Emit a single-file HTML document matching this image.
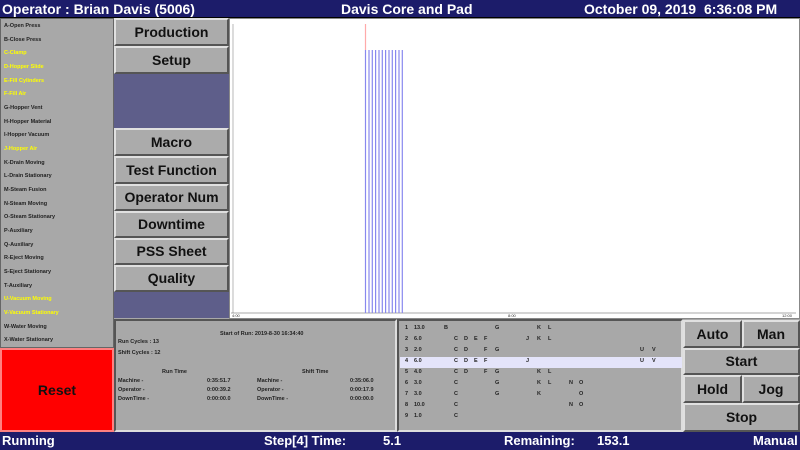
<!DOCTYPE html><html><head><style>
*{margin:0;padding:0;box-sizing:border-box}
body{width:800px;height:450px;position:relative;background:#a8a8a8;font-family:"Liberation Sans",sans-serif;overflow:hidden}
.a{position:absolute}
.bar{background:#1c1c6a;color:#fff;font-weight:bold;font-size:14px}
.btn{position:absolute;background:#ababab;border:2px solid;border-color:#e0e0e0 #555 #555 #e0e0e0;font-weight:bold;font-size:14px;text-align:center;color:#111}
.li{position:absolute;left:4px;font-size:5.5px;font-weight:bold;color:#222}
.y{color:#ffff00}
.s{position:absolute;font-size:5.5px;font-weight:bold;color:#222}
.r{position:absolute;left:0;width:800px;height:8px}
.r span{position:absolute;font-size:5.5px;font-weight:bold;color:#222}
</style></head><body>
<div class="a bar" style="left:0;top:0;width:800px;height:18px;border-bottom:1px solid #000"></div>
<div class="a" style="left:2px;top:1px;color:#fff;font-weight:bold;font-size:14px">Operator : Brian Davis (5006)</div>
<div class="a" style="left:341px;top:1px;color:#fff;font-weight:bold;font-size:14px">Davis Core and Pad</div>
<div class="a" style="left:584px;top:1px;color:#fff;font-weight:bold;font-size:14px">October 09, 2019</div>
<div class="a" style="left:704px;top:1px;color:#fff;font-weight:bold;font-size:14px">6:36:08 PM</div>

<div class="a" style="left:0;top:18px;width:114px;height:330px;background:#a8a8a8;border:1px solid #666"></div>
<div class="li" style="top:23px">A-Open Press</div>
<div class="li" style="top:37px">B-Close Press</div>
<div class="li y" style="top:50px">C-Clamp</div>
<div class="li y" style="top:64px">D-Hopper Slide</div>
<div class="li y" style="top:78px">E-Fill Cylinders</div>
<div class="li y" style="top:91px">F-Fill Air</div>
<div class="li" style="top:105px">G-Hopper Vent</div>
<div class="li" style="top:119px">H-Hopper Material</div>
<div class="li" style="top:132px">I-Hopper Vacuum</div>
<div class="li y" style="top:146px">J-Hopper Air</div>
<div class="li" style="top:160px">K-Drain Moving</div>
<div class="li" style="top:173px">L-Drain Stationary</div>
<div class="li" style="top:187px">M-Steam Fusion</div>
<div class="li" style="top:201px">N-Steam Moving</div>
<div class="li" style="top:214px">O-Steam Stationary</div>
<div class="li" style="top:228px">P-Auxiliary</div>
<div class="li" style="top:242px">Q-Auxiliary</div>
<div class="li" style="top:255px">R-Eject Moving</div>
<div class="li" style="top:269px">S-Eject Stationary</div>
<div class="li" style="top:283px">T-Auxiliary</div>
<div class="li y" style="top:296px">U-Vacuum Moving</div>
<div class="li y" style="top:310px">V-Vacuum Stationary</div>
<div class="li" style="top:324px">W-Water Moving</div>
<div class="li" style="top:337px">X-Water Stationary</div>

<div class="a" style="left:0;top:348px;width:114px;height:84px;background:#ff0000;border:2px solid #ff8080;color:#111;font-weight:bold;font-size:14px;text-align:center;line-height:80px">Reset</div>

<div class="btn" style="left:114px;top:18px;width:115px;height:28px;line-height:24px">Production</div>
<div class="btn" style="left:114px;top:46px;width:115px;height:28px;line-height:24px">Setup</div>
<div class="a" style="left:114px;top:74px;width:115px;height:54px;background:#5e5e8a"></div>
<div class="btn" style="left:114px;top:128px;width:115px;height:28px;line-height:24px">Macro</div>
<div class="btn" style="left:114px;top:156px;width:115px;height:28px;line-height:24px">Test Function</div>
<div class="btn" style="left:114px;top:184px;width:115px;height:27px;line-height:23px">Operator Num</div>
<div class="btn" style="left:114px;top:211px;width:115px;height:27px;line-height:23px">Downtime</div>
<div class="btn" style="left:114px;top:238px;width:115px;height:27px;line-height:23px">PSS Sheet</div>
<div class="btn" style="left:114px;top:265px;width:115px;height:27px;line-height:23px">Quality</div>
<div class="a" style="left:114px;top:292px;width:115px;height:26px;background:#5e5e8a"></div>

<div class="a" style="left:229px;top:18px;width:571px;height:301px;background:#fff;border:1px solid #888"></div>
<svg class="a" style="left:0;top:0" width="800" height="450">
<line x1="233" y1="24" x2="233" y2="313" stroke="#888" stroke-width="0.6"/>
<line x1="231" y1="313" x2="796" y2="313" stroke="#555" stroke-width="0.6"/>
<line x1="365.5" y1="24" x2="365.5" y2="50" stroke="#ffaaaa" stroke-width="1.2"/>
<g stroke="#8888ee" stroke-width="1.2">
<line x1="365.5" y1="50" x2="365.5" y2="313"/><line x1="369" y1="50" x2="369" y2="313"/><line x1="372.3" y1="50" x2="372.3" y2="313"/><line x1="375.6" y1="50" x2="375.6" y2="313"/><line x1="379" y1="50" x2="379" y2="313"/><line x1="382.3" y1="50" x2="382.3" y2="313"/><line x1="385.6" y1="50" x2="385.6" y2="313"/><line x1="389" y1="50" x2="389" y2="313"/><line x1="392.3" y1="50" x2="392.3" y2="313"/><line x1="395.6" y1="50" x2="395.6" y2="313"/><line x1="399" y1="50" x2="399" y2="313"/><line x1="402.3" y1="50" x2="402.3" y2="313"/>
</g>
<text x="232" y="317" font-size="4" font-family="Liberation Sans" fill="#333">4:00</text>
<text x="508" y="317" font-size="4" font-family="Liberation Sans" fill="#333">8:00</text>
<text x="782" y="317" font-size="4" font-family="Liberation Sans" fill="#333">12:00</text>
</svg>

<div class="a" style="left:114px;top:319px;width:283px;height:113px;border:2px solid;border-color:#555 #ddd #ddd #555"></div>
<div class="s" style="left:220px;top:331px">Start of Run: 2019-8-30 16:34:40</div>
<div class="s" style="left:118px;top:339px">Run Cycles : 13</div>
<div class="s" style="left:118px;top:350px">Shift Cycles : 12</div>
<div class="s" style="left:162px;top:369px">Run Time</div>
<div class="s" style="left:302px;top:369px">Shift Time</div>
<div class="s" style="left:118px;top:378px">Machine -</div><div class="s" style="left:207px;top:378px">0:35:51.7</div><div class="s" style="left:257px;top:378px">Machine -</div><div class="s" style="left:350px;top:378px">0:35:06.0</div>
<div class="s" style="left:118px;top:387px">Operator -</div><div class="s" style="left:207px;top:387px">0:00:39.2</div><div class="s" style="left:257px;top:387px">Operator -</div><div class="s" style="left:350px;top:387px">0:00:17.9</div>
<div class="s" style="left:118px;top:396px">DownTime -</div><div class="s" style="left:207px;top:396px">0:00:00.0</div><div class="s" style="left:257px;top:396px">DownTime -</div><div class="s" style="left:350px;top:396px">0:00:00.0</div>

<div class="a" style="left:397px;top:319px;width:286px;height:113px;border:2px solid;border-color:#555 #ddd #ddd #555"></div>
<div class="a" style="left:400px;top:357px;width:282px;height:11px;background:#e4e4fa"></div>

<div class="r" style="top:325px"><span style="left:405px">1</span><span style="left:414px">13.0</span><span style="left:444px">B</span><span style="left:495px">G</span><span style="left:537px">K</span><span style="left:548px">L</span></div>
<div class="r" style="top:336px"><span style="left:405px">2</span><span style="left:414px">6.0</span><span style="left:454px">C</span><span style="left:464px">D</span><span style="left:474px">E</span><span style="left:484px">F</span><span style="left:526px">J</span><span style="left:537px">K</span><span style="left:548px">L</span></div>
<div class="r" style="top:347px"><span style="left:405px">3</span><span style="left:414px">2.0</span><span style="left:454px">C</span><span style="left:464px">D</span><span style="left:484px">F</span><span style="left:495px">G</span><span style="left:640px">U</span><span style="left:652px">V</span></div>
<div class="r" style="top:358px"><span style="left:405px">4</span><span style="left:414px">6.0</span><span style="left:454px">C</span><span style="left:464px">D</span><span style="left:474px">E</span><span style="left:484px">F</span><span style="left:526px">J</span><span style="left:640px">U</span><span style="left:652px">V</span></div>
<div class="r" style="top:369px"><span style="left:405px">5</span><span style="left:414px">4.0</span><span style="left:454px">C</span><span style="left:464px">D</span><span style="left:484px">F</span><span style="left:495px">G</span><span style="left:537px">K</span><span style="left:548px">L</span></div>
<div class="r" style="top:380px"><span style="left:405px">6</span><span style="left:414px">3.0</span><span style="left:454px">C</span><span style="left:495px">G</span><span style="left:537px">K</span><span style="left:548px">L</span><span style="left:569px">N</span><span style="left:579px">O</span></div>
<div class="r" style="top:391px"><span style="left:405px">7</span><span style="left:414px">3.0</span><span style="left:454px">C</span><span style="left:495px">G</span><span style="left:537px">K</span><span style="left:579px">O</span></div>
<div class="r" style="top:402px"><span style="left:405px">8</span><span style="left:414px">10.0</span><span style="left:454px">C</span><span style="left:569px">N</span><span style="left:579px">O</span></div>
<div class="r" style="top:413px"><span style="left:405px">9</span><span style="left:414px">1.0</span><span style="left:454px">C</span></div>

<div class="btn" style="left:683px;top:320px;width:59px;height:28px;line-height:24px">Auto</div>
<div class="btn" style="left:742px;top:320px;width:58px;height:28px;line-height:24px">Man</div>
<div class="btn" style="left:683px;top:348px;width:117px;height:27px;line-height:23px">Start</div>
<div class="btn" style="left:683px;top:375px;width:59px;height:28px;line-height:24px">Hold</div>
<div class="btn" style="left:742px;top:375px;width:58px;height:28px;line-height:24px">Jog</div>
<div class="btn" style="left:683px;top:403px;width:117px;height:29px;line-height:25px">Stop</div>

<div class="a bar" style="left:0;top:432px;width:800px;height:18px"></div>
<div class="a" style="left:2px;top:433px;color:#fff;font-weight:bold;font-size:13px">Running</div>
<div class="a" style="left:264px;top:433px;color:#fff;font-weight:bold;font-size:13px">Step[4] Time:</div>
<div class="a" style="left:383px;top:433px;color:#fff;font-weight:bold;font-size:13px">5.1</div>
<div class="a" style="left:504px;top:433px;color:#fff;font-weight:bold;font-size:13px">Remaining:</div>
<div class="a" style="left:597px;top:433px;color:#fff;font-weight:bold;font-size:13px">153.1</div>
<div class="a" style="left:753px;top:433px;color:#fff;font-weight:bold;font-size:13px">Manual</div>
</body></html>
